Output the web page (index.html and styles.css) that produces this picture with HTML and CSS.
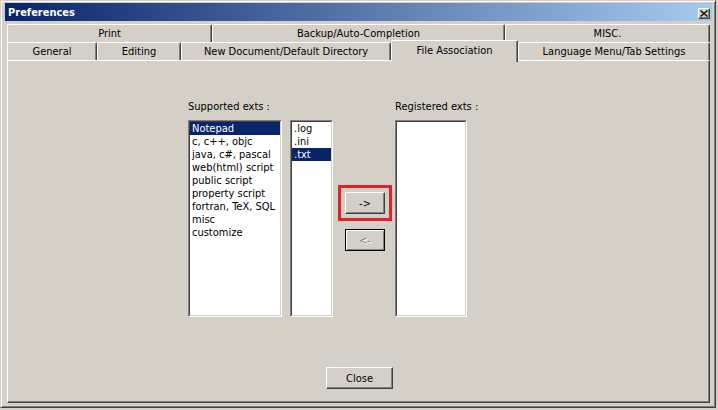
FILE: index.html
```html
<!DOCTYPE html>
<html>
<head>
<meta charset="utf-8">
<link rel="stylesheet" href="styles.css">
</head>
<body>
<div class="window">
  <div class="titlebar">
    <span class="title">Preferences</span>
    <span class="title-close"><svg width="8" height="7" viewBox="0 0 8 7"><path d="M0.5 0.5 L7.5 6.5 M7.5 0.5 L0.5 6.5" stroke="#000" stroke-width="1.3" fill="none"/></svg></span>
  </div>
  <div class="tabs">
    <div class="tabrow">
      <div class="tab t-print">Print</div>
      <div class="tab t-backup">Backup/Auto-Completion</div>
      <div class="tab t-misc">MISC.</div>
    </div>
    <div class="tabrow">
      <div class="tab t-general">General</div>
      <div class="tab t-editing">Editing</div>
      <div class="tab t-newdoc">New Document/Default Directory</div>
      <div class="tab t-fileassoc selected">File Association</div>
      <div class="tab t-lang">Language Menu/Tab Settings</div>
    </div>
  </div>
  <div class="panel">
    <div class="main">
      <div class="col-a">
        <div class="label">Supported exts :</div>
        <div class="lists">
          <div class="listbox lb-lang">
            <div class="listinner">
              <div class="item sel">Notepad</div>
              <div class="item">c, c++, objc</div>
              <div class="item">java, c#, pascal</div>
              <div class="item">web(html) script</div>
              <div class="item">public script</div>
              <div class="item">property script</div>
              <div class="item">fortran, TeX, SQL</div>
              <div class="item">misc</div>
              <div class="item">customize</div>
            </div>
          </div>
          <div class="listbox lb-ext">
            <div class="listinner">
              <div class="item">.log</div>
              <div class="item">.ini</div>
              <div class="item sel">.txt</div>
            </div>
          </div>
        </div>
      </div>
      <div class="col-b">
        <div class="redbox"><div class="btn arrow">-&gt;</div></div>
        <div class="btn arrow back">&lt;-</div>
      </div>
      <div class="col-c">
        <div class="label">Registered exts :</div>
        <div class="listbox lb-reg"><div class="listinner"></div></div>
      </div>
    </div>
    <div class="btn close">Close</div>
  </div>
</div>
</body>
</html>
```
FILE: styles.css
```css
html, body {
  margin: 0;
  padding: 0;
  background: #d4d0c8;
}
body {
  width: 718px;
  height: 410px;
  overflow: hidden;
  font-family: "DejaVu Sans Condensed", "DejaVu Sans", sans-serif;
  font-size: 11px;
  color: #000;
}
.window {
  width: 716px;
  height: 408px;
  box-sizing: border-box;
  border: 1px solid;
  border-color: #d4d0c8 #404040 #404040 #d4d0c8;
  box-shadow: inset 1px 1px #fff, inset -1px -1px #808080;
  padding: 2px 3px 4px 4px;
  display: flex;
  flex-direction: column;
}
.titlebar {
  height: 18px;
  flex: none;
  background: linear-gradient(to right, #0a246a, #a6caf0);
  display: flex;
  align-items: center;
  justify-content: space-between;
  padding: 0 2px 0 3px;
}
.title {
  color: #fff;
  font-weight: bold;
  font-size: 11px;
  line-height: 13px;
}
.title-close {
  width: 12px;
  height: 11px;
  box-sizing: border-box;
  background: #d4d0c8;
  border: 1px solid;
  border-color: #fff #404040 #404040 #fff;
  box-shadow: inset -1px -1px #808080;
  display: flex;
  align-items: center;
  justify-content: center;
  margin-top: 3px;
}
.title-close svg { display: block; }
.tabs {
  margin-top: 3px;
  padding-left: 2px;
  flex: none;
}
.tabrow {
  display: flex;
  height: 18px;
  align-items: flex-start;
}
.tab {
  height: 18px;
  box-sizing: border-box;
  border-top: 1px solid #fff;
  border-left: 1px solid #fff;
  border-right: 1px solid #404040;
  box-shadow: inset -1px 0 #808080;
  text-align: center;
  line-height: 17px;
  white-space: nowrap;
  background: #d4d0c8;
  border-radius: 2px 2px 0 0;
}
.t-print { width: 205px; }
.t-backup { width: 293px; }
.t-misc { width: 205px; }
.t-general { width: 90px; }
.t-editing { width: 84px; }
.t-newdoc { width: 210px; }
.t-fileassoc { width: 127px; }
.t-lang { width: 192px; }
.tab.selected {
  height: 22px;
  margin-top: -2px;
  line-height: 19px;
  position: relative;
  z-index: 1;
}
.panel {
  margin-left: 2px;
  width: 703px;
  height: 343px;
  box-sizing: border-box;
  border: 1px solid;
  border-color: #fff #404040 #404040 #fff;
  box-shadow: inset -1px -1px #808080;
  display: flex;
  flex-direction: column;
  padding-top: 39px;
}
.main {
  display: flex;
  align-items: flex-start;
  margin-left: 180px;
}
.label {
  height: 13px;
  line-height: 13px;
  margin-bottom: 7px;
  white-space: nowrap;
}
.lists {
  display: flex;
  gap: 8px;
}
.listbox {
  height: 197px;
  box-sizing: border-box;
  border: 1px solid;
  border-color: #808080 #fff #fff #808080;
  display: flex;
}
.listinner {
  flex: 1;
  border: 1px solid;
  border-color: #404040 #d4d0c8 #d4d0c8 #404040;
  background: #fff;
}
.lb-lang { width: 94px; }
.lb-ext { width: 43px; }
.lb-reg { width: 72px; }
.item {
  height: 13px;
  line-height: 13px;
  padding-left: 2px;
  white-space: nowrap;
}
.item.sel {
  background: #0a246a;
  color: #fff;
}
.col-a { width: 145px; }
.col-b {
  margin-left: 5px;
  width: 54px;
  margin-top: 85px;
  display: flex;
  flex-direction: column;
}
.col-c { margin-left: 3px; }
.redbox {
  width: 54px;
  height: 36px;
  box-sizing: border-box;
  border: 3px solid #e0222a;
  padding: 4px;
}
.btn {
  box-sizing: border-box;
  background: #d4d0c8;
  border: 1px solid;
  border-color: #fff #404040 #404040 #fff;
  box-shadow: inset -1px -1px #808080;
  display: flex;
  align-items: center;
  justify-content: center;
}
.arrow {
  width: 40px;
  height: 22px;
}
.back {
  margin-top: 8px;
  margin-left: 7px;
  color: #808080;
  text-shadow: 1px 1px #fff;
  border-color: #000;
  box-shadow: inset 1px 1px #fff, inset -1px -1px #808080;
}
.close {
  width: 67px;
  height: 22px;
  margin-top: 50px;
  align-self: center;
  margin-left: 2px;
}
```
